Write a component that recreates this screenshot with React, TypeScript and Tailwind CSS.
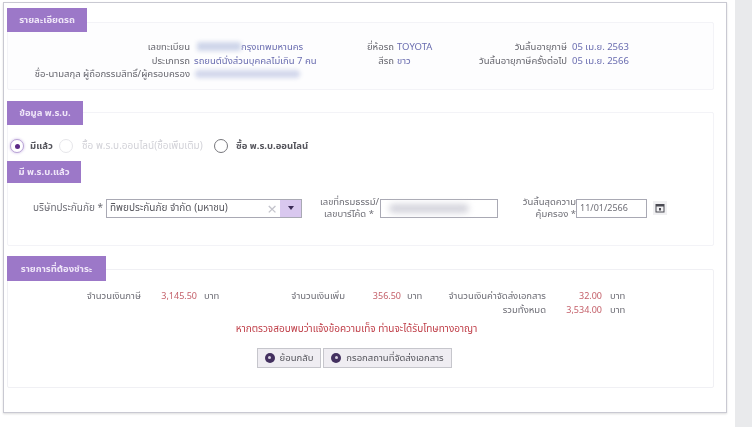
import React from "react";

function Badge({ children, w }: { children: React.ReactNode; w: string }) {
  return (
    <div className={`relative z-10 flex items-center justify-center bg-[#9c78c8] text-[9.5px] font-bold text-[#efe6f8] ${w}`}>
      {children}
    </div>
  );
}

function Radio({ checked, disabled }: { checked?: boolean; disabled?: boolean }) {
  return (
    <span
      className={`flex h-[14px] w-[14px] shrink-0 items-center justify-center rounded-full border bg-white ${
        disabled ? "border-[#e6e6ea]" : checked ? "border-[#b9a3d6] shadow-[0_0_3px_#c9b6e2]" : "border-[#77777c]"
      }`}
    >
      {checked && <span className="h-[5px] w-[5px] rounded-full bg-[#5c2a86]" />}
    </span>
  );
}

function Label({ children, pad }: { children: React.ReactNode; pad?: boolean }) {
  return <div className={`whitespace-nowrap text-right text-[#66666e] ${pad ? "pr-[4px]" : ""}`}>{children}</div>;
}

function Value({ children }: { children: React.ReactNode }) {
  return <div className="whitespace-nowrap text-[#6a6db0]">{children}</div>;
}

function MoneyLabel({ children, extra }: { children: React.ReactNode; extra?: string }) {
  return <div className={`whitespace-nowrap text-right text-[#6e6e76] ${extra ?? ""}`}>{children}</div>;
}

function MoneyValue({ children }: { children: React.ReactNode }) {
  return <div className="text-right text-[9px] text-[#c4606a]">{children}</div>;
}

function PlusDot() {
  return (
    <span className="flex h-[10px] w-[10px] shrink-0 items-center justify-center rounded-full bg-[#43305f]">
      <span className="h-[3px] w-[3px] rounded-full bg-[#d8d2e2]" />
    </span>
  );
}

export default function App() {
  return (
    <div className="flex h-[431px] w-[754px] items-start overflow-hidden bg-white font-['Noto_Sans','Noto_Sans_Thai','DejaVu_Sans',sans-serif] text-[9.5px] leading-[13.5px] blur-[0.5px]">
      <div className="ml-[3px] mt-[2px] h-[411px] w-[724px] border border-[#c9c9d2] bg-white pl-[3px] pr-[12px] pt-[5px] shadow-[0_1px_2px_#dddddd]">
        {/* รายละเอียดรถ */}
        <Badge w="h-[24px] w-[80px]">รายละเอียดรถ</Badge>
        <div className="-mt-[10px] h-[68px] rounded-[2px] border border-[#f3f3f7] bg-[#fdfdfe] pt-[17px]">
          <div className="grid grid-cols-[186px_146px_54px_81px_92px_1fr]">
            <Label pad>เลขทะเบียน</Label>
            <div className="flex items-center text-[#6a6db0]">
              <span className="ml-[3px] h-[9px] w-[44px] rounded-[2px] bg-[#cfd6ea] blur-[2px]" />
              <span className="whitespace-nowrap">กรุงเทพมหานคร</span>
            </div>
            <Label>ยี่ห้อรถ</Label>
            <div className="pl-[3px]"><Value>TOYOTA</Value></div>
            <Label>วันสิ้นอายุภาษี</Label>
            <div className="pl-[5px]"><Value>05 เม.ย. 2563</Value></div>

            <Label pad>ประเภทรถ</Label>
            <Value>รถยนต์นั่งส่วนบุคคลไม่เกิน 7 คน</Value>
            <Label>สีรถ</Label>
            <div className="pl-[3px]"><Value>ขาว</Value></div>
            <Label>วันสิ้นอายุภาษีครั้งต่อไป</Label>
            <div className="pl-[5px]"><Value>05 เม.ย. 2566</Value></div>

            <Label pad>ชื่อ-นามสกุล ผู้ถือกรรมสิทธิ์/ผู้ครอบครอง</Label>
            <div className="flex items-center">
              <span className="ml-[1px] h-[8px] w-[105px] rounded-full bg-[#d3d8ec] blur-[2px]" />
            </div>
          </div>
        </div>

        {/* ข้อมูล พ.ร.บ. */}
        <div className="mt-[11px]">
          <Badge w="h-[24px] w-[76px]">ข้อมูล พ.ร.บ.</Badge>
        </div>
        <div className="-mt-[13px] h-[134px] rounded-[2px] border border-[#f3f3f7] bg-white pt-[26px]">
          <div className="flex h-[14px] items-center pl-[2px]">
            <Radio checked />
            <span className="ml-[6px] w-[29px] whitespace-nowrap font-bold text-[#55555c]">มีแล้ว</span>
            <Radio disabled />
            <span className="ml-[9px] w-[132px] whitespace-nowrap text-[10px] text-[#d2d2d8]">ซื้อ พ.ร.บ.ออนไลน์(ซื้อเพิ่มเติม)</span>
            <Radio />
            <span className="ml-[8px] whitespace-nowrap font-bold text-[#55555c]">ซื้อ พ.ร.บ.ออนไลน์</span>
          </div>
          <div className="mt-[8px]">
            <Badge w="-ml-px h-[22px] w-[74px]">มี พ.ร.บ.แล้ว</Badge>
          </div>
          <div className="mt-[15px] flex h-[20px] items-center">
            <div className="w-[95px] whitespace-nowrap text-right text-[10px] text-[#6e6e76]">บริษัทประกันภัย *</div>
            <div className="ml-[3px] flex h-[19px] w-[196px] border border-[#a9a9b4] bg-white">
              <div className="flex flex-1 items-center justify-between pl-[3px] pr-[3px] text-[10px] text-[#55555c]">
                <span className="whitespace-nowrap">ทิพยประกันภัย จำกัด (มหาชน)</span>
                <span className="text-[17px] leading-none text-[#c4c4cc]">×</span>
              </div>
              <div className="flex w-[21px] items-center justify-center bg-[#d9c8ef]">
                <span className="h-0 w-0 border-x-[3.5px] border-t-[4px] border-x-transparent border-t-[#3a2a55]" />
              </div>
            </div>
            <div className="ml-[18px] w-[58px] whitespace-nowrap text-center leading-[12px] text-[#6e6e76]">
              เลขที่กรมธรรม์/
              <br />
              เลขบาร์โค้ด *
            </div>
            <div className="ml-[2px] flex h-[19px] w-[118px] items-center border border-[#a9a9b4] bg-white pl-[8px]">
              <span className="h-[9px] w-[80px] rounded-full bg-[#d4d4dc] blur-[3px]" />
            </div>
            <div className="ml-[24px] w-[54px] whitespace-nowrap text-right leading-[12px] text-[#6e6e76]">
              <span>วันสิ้นสุดความ</span>
              <br />
              คุ้มครอง *
            </div>
            <div className="flex h-[19px] w-[71px] items-center border border-[#a9a9b4] bg-white pl-[3px] text-[9px] text-[#6e6e76]">
              11/01/2566
            </div>
            <div className="ml-[6px] flex h-[14px] w-[14px] items-center justify-center bg-[#f0f0f2]">
              <svg width="10" height="10" viewBox="0 0 10 10">
                <rect x="1" y="1.5" width="8" height="7.5" fill="none" stroke="#4a4a52" strokeWidth="1" />
                <rect x="1" y="1.5" width="8" height="2" fill="#4a4a52" />
                <rect x="4" y="5" width="2" height="2.5" fill="#4a4a52" />
              </svg>
            </div>
          </div>
        </div>

        {/* รายการที่ต้องชำระ */}
        <div className="mt-[10px]">
          <Badge w="h-[25px] w-[99px]">รายการที่ต้องชำระ</Badge>
        </div>
        <div className="-mt-[12px] h-[119px] rounded-[2px] border border-[#f0f0f4] bg-white pt-[19px]">
          <div className="grid grid-cols-[133px_56px_25px_123px_56px_24px_121px_56px_25px]">
            <MoneyLabel>จำนวนเงินภาษี</MoneyLabel>
            <MoneyValue>3,145.50</MoneyValue>
            <div className="whitespace-nowrap pl-[7px] text-[#6e6e76]">บาท</div>
            <MoneyLabel>จำนวนเงินเพิ่ม</MoneyLabel>
            <MoneyValue>356.50</MoneyValue>
            <div className="whitespace-nowrap pl-[6px] text-[#6e6e76]">บาท</div>
            <MoneyLabel>จำนวนเงินค่าจัดส่งเอกสาร</MoneyLabel>
            <MoneyValue>32.00</MoneyValue>
            <div className="whitespace-nowrap pl-[8px] text-[#6e6e76]">บาท</div>
            <MoneyLabel extra="col-start-7">รวมทั้งหมด</MoneyLabel>
            <MoneyValue>3,534.00</MoneyValue>
            <div className="whitespace-nowrap pl-[8px] text-[#6e6e76]">บาท</div>
          </div>
          <div className="mt-[6px] pr-[8px] text-center text-[10px] text-[#c0404a]">
            หากตรวจสอบพบว่าแจ้งข้อความเท็จ ท่านจะได้รับโทษทางอาญา
          </div>
          <div className="mt-[12px] flex pl-[249px]">
            <button className="flex h-[20px] w-[64px] items-center justify-center gap-[5px] whitespace-nowrap border border-[#c6c6cc] bg-[#efedf2] text-[#55555c]">
              <PlusDot />
              ย้อนกลับ
            </button>
            <button className="ml-[2px] flex h-[20px] w-[129px] items-center justify-center gap-[5px] whitespace-nowrap border border-[#c6c6cc] bg-[#efedf2] text-[#55555c]">
              <PlusDot />
              กรอกสถานที่จัดส่งเอกสาร
            </button>
          </div>
        </div>
      </div>
      <div className="ml-[8px] h-[427px] w-[17px] bg-[#e9eaec]" />
    </div>
  );
}
